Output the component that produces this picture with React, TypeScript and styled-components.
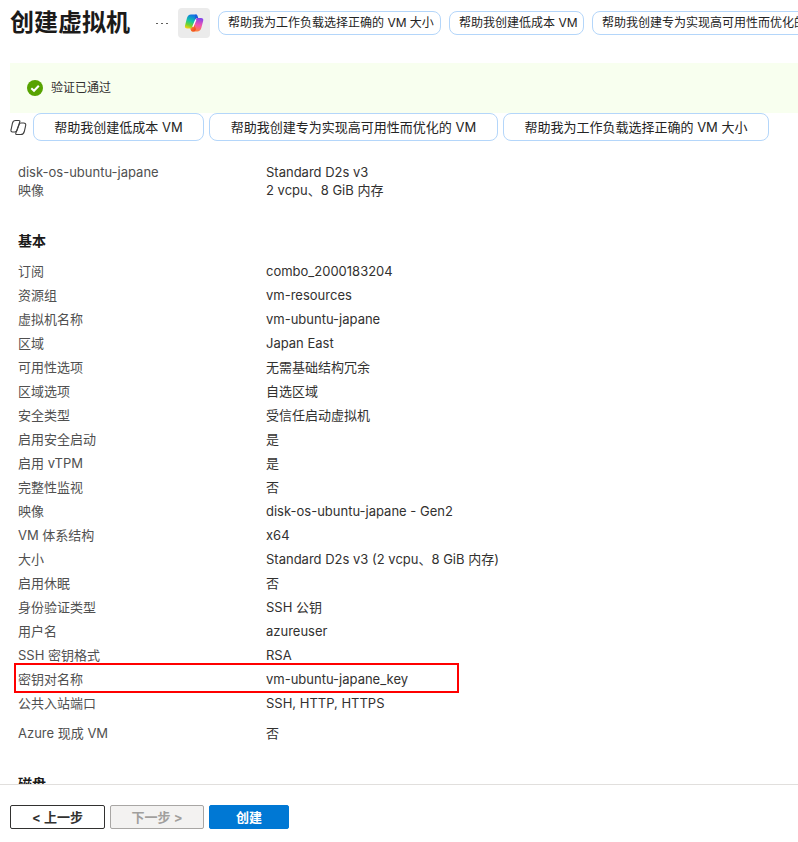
import React from "react";
import styled, { createGlobalStyle } from "styled-components";

const Global = createGlobalStyle`
  html, body { margin: 0; padding: 0; background: #fff; height: 100%; overflow: hidden; }
  body { font-family: Inter, "Noto Sans CJK SC", sans-serif; color: #323130; }
  #root { height: 100%; }
`;

const Page = styled.div`
  width: 798px;
  height: 842px;
  display: flex;
  flex-direction: column;
  overflow: hidden;
`;
const Header = styled.header`
  height: 30px;
  padding: 8px 0 0 10px;
  display: flex;
  align-items: center;
  flex: none;
  overflow: hidden;
`;
const Title = styled.h1`
  margin: 0;
  font-size: 24px;
  line-height: 30px;
  font-weight: 700;
  color: #1b1a19;
  white-space: nowrap;
`;
const More = styled.span`
  margin-left: 26px;
  width: 12px;
  display: flex;
  justify-content: space-between;
  flex: none;
`;
const Dot = styled.i`
  width: 2px;
  height: 1px;
  background: #605e5c;
`;
const CopilotTile = styled.div`
  margin-left: 10px;
  width: 32px;
  height: 30px;
  border-radius: 4px;
  background: #ebebeb;
  display: flex;
  align-items: center;
  justify-content: center;
  flex: none;
`;
const HeaderChips = styled.div`
  margin-left: 8px;
  display: flex;
  gap: 8px;
  flex: none;
`;
const HeaderChip = styled.span<{ $w: number }>`
  flex: none;
  width: ${(p) => p.$w}px;
  box-sizing: border-box;
  height: 24px;
  padding-left: 9px;
  border: 1px solid #b4d6fa;
  border-radius: 8px;
  font-size: 12px;
  line-height: 22px;
  color: #242424;
  white-space: nowrap;
`;
const Banner = styled.div`
  margin: 25px 0 0 10px;
  height: 50px;
  padding: 0 0 0 17px;
  background: #f8ffef;
  display: flex;
  align-items: center;
  gap: 8px;
  flex: none;
  font-size: 12px;
  color: #323130;
`;
const BannerText = styled.span`
  line-height: 16px;
`;
const PromptRow = styled.div`
  display: flex;
  align-items: center;
  height: 28px;
  padding-left: 10px;
  flex: none;
`;
const PromptIcon = styled.span`
  display: flex;
  width: 17px;
  margin-right: 6px;
  flex: none;
`;
const PromptChips = styled.div`
  display: flex;
  gap: 5px;
`;
const PromptChip = styled.span<{ $w: number }>`
  width: ${(p) => p.$w}px;
  box-sizing: border-box;
  height: 28px;
  border: 1px solid #b4d6fa;
  border-radius: 8px;
  font-size: 13px;
  line-height: 26px;
  text-align: center;
  color: #242424;
  white-space: nowrap;
`;
const Content = styled.main`
  flex: 1;
  min-height: 0;
  overflow: hidden;
  padding: 22px 0 0 18px;
  font-size: 13px;
`;
const Summary = styled.div`
  display: grid;
  grid-template-columns: 248px 1fr;
  line-height: 18px;
`;
const SectionTitle = styled.h2`
  margin: 32px 0 0;
  font-size: 14px;
  line-height: 20px;
  font-weight: 700;
  color: #1b1a19;
`;
const Rows = styled.div`
  margin-top: 8px;
  display: flex;
  flex-direction: column;
`;
const Row = styled.div<{ $tall?: boolean }>`
  display: grid;
  grid-template-columns: 248px 1fr;
  height: 24px;
  line-height: 24px;
  position: relative;
  margin-top: ${(p) => (p.$tall ? "6px" : "0")};
`;
const Mark = styled.span`
  position: absolute;
  left: -4px;
  top: -4px;
  width: 445px;
  height: 30px;
  box-sizing: border-box;
  border: 2px solid #f00;
`;
const Label = styled.span`
  color: #505050;
`;
const Value = styled.span`
  color: #323130;
`;
const LastSection = styled(SectionTitle)`
  margin-top: 29px;
`;
const Footer = styled.footer`
  flex: none;
  box-sizing: border-box;
  height: 58px;
  border-top: 1px solid #e1dfdd;
  padding: 20px 0 0 10px;
  display: flex;
  gap: 5px;
  align-items: flex-start;
  background: #fff;
`;
const Btn = styled.button<{ $kind: "prev" | "next" | "go" }>`
  box-sizing: border-box;
  height: 24px;
  padding: 0;
  width: ${(p) => (p.$kind === "prev" ? 95 : p.$kind === "next" ? 94 : 80)}px;
  border-radius: 2px;
  font-family: inherit;
  font-size: 13px;
  font-weight: 700;
  line-height: 20px;
  border: 1px solid
    ${(p) => (p.$kind === "prev" ? "#323130" : p.$kind === "next" ? "#a8a6a4" : "#0078d4")};
  background: ${(p) => (p.$kind === "prev" ? "#fff" : p.$kind === "next" ? "#f3f2f1" : "#0078d4")};
  color: ${(p) => (p.$kind === "prev" ? "#323130" : p.$kind === "next" ? "#a19f9d" : "#fff")};
`;

const CopilotLogo = () => (
  <svg width="20" height="20" viewBox="0 0 20 20" aria-hidden="true">
    <defs>
      <linearGradient id="cpa" x1="0.6" y1="0" x2="0.3" y2="1">
        <stop offset="0" stopColor="#0f6fe8" />
        <stop offset="0.45" stopColor="#12c4a8" />
        <stop offset="0.75" stopColor="#6fd32e" />
        <stop offset="1" stopColor="#f6d010" />
      </linearGradient>
      <linearGradient id="cpb" x1="0.6" y1="0" x2="0.4" y2="1">
        <stop offset="0" stopColor="#8344ea" />
        <stop offset="0.5" stopColor="#f052b0" />
        <stop offset="1" stopColor="#fd8632" />
      </linearGradient>
      <linearGradient id="cpc" x1="0" y1="0" x2="1" y2="1">
        <stop offset="0" stopColor="#f9a020" />
        <stop offset="1" stopColor="#f03a24" />
      </linearGradient>
    </defs>
    <path d="M7 1.500h5c1 0 1.400.7 1 1.600L9 13.500c-.6 1.500-1.500 2.100-3 2.100H3.200C1.400 15.600.6 14.500 1 12.800l1.900-7.500C3.500 3 4.900 1.500 7 1.500z" fill="url(#cpa)" />
    <path d="M13.800 5h3.200c1.800 0 2.600 1.100 2.200 2.700l-1.900 7.200c-.6 2.200-2 3.500-4.100 3.500H8.200c-1 0-1.500-.7-1.100-1.600L11.600 6.500c.4-1 1.100-1.500 2.200-1.500z" fill="url(#cpb)" />
    <path d="M6.200 15.600c1.400 0 2.300-.7 2.800-2l1-2.600 1.700 4.300c.5 1.300-.2 3.100-1.600 3.100H8.500c-1.100 0-1.900-1.300-2.300-2.800z" fill="url(#cpc)" />
    <path d="M11.500 1.500c1.100 0 1.900.7 2.200 1.800l.5 1.700h-1.500c-1 0-1.600.5-2 1.500l.3-2.600c.2-1 .2-2.400.5-2.400z" fill="#1a5fd8" />
    <path d="M11.700 7 9 13.500" fill="none" stroke="#fff" strokeWidth="1.300" strokeLinecap="round" />
  </svg>
);

const CopilotMono = () => (
  <svg width="17" height="17" viewBox="0 0 17 17" fill="none" stroke="#3f3f3f" strokeWidth="1.100" aria-hidden="true">
    <path d="M5.500 1.500h3.400c.8 0 1.200.6.900 1.300L6.900 11.500c-.4 1-1 1.500-2 1.500H2.500C1.300 13 .7 12.100 1 11l1.400-6.700C2.800 2.700 4 1.500 5.500 1.500z" />
    <path d="M10.800 4h2.900c1.500 0 2.300.9 2 2.300l-1.400 6.200c-.5 1.900-1.600 3-3.400 3H6.800c-.9 0-1.300-.6-1-1.400L9.200 5.400C9.500 4.500 10 4 10.800 4z" />
  </svg>
);

const CheckBadge = () => (
  <svg width="16" height="16" viewBox="0 0 16 16" aria-hidden="true">
    <circle cx="8" cy="8" r="8" fill="#57a300" />
    <path d="M4.300 8.200 7 10.800l4.800-5" fill="none" stroke="#fff" strokeWidth="2" />
  </svg>
);

const basics: [string, string][] = [
  ["订阅", "combo_2000183204"],
  ["资源组", "vm-resources"],
  ["虚拟机名称", "vm-ubuntu-japane"],
  ["区域", "Japan East"],
  ["可用性选项", "无需基础结构冗余"],
  ["区域选项", "自选区域"],
  ["安全类型", "受信任启动虚拟机"],
  ["启用安全启动", "是"],
  ["启用 vTPM", "是"],
  ["完整性监视", "否"],
  ["映像", "disk-os-ubuntu-japane - Gen2"],
  ["VM 体系结构", "x64"],
  ["大小", "Standard D2s v3 (2 vcpu、8 GiB 内存)"],
  ["启用休眠", "否"],
  ["身份验证类型", "SSH 公钥"],
  ["用户名", "azureuser"],
  ["SSH 密钥格式", "RSA"],
  ["密钥对名称", "vm-ubuntu-japane_key"],
  ["公共入站端口", "SSH, HTTP, HTTPS"],
  ["Azure 现成 VM", "否"],
];

export default function App() {
  return (
    <Page>
      <Global />
      <Header>
        <Title>创建虚拟机</Title>
        <More>
          <Dot />
          <Dot />
          <Dot />
        </More>
        <CopilotTile>
          <CopilotLogo />
        </CopilotTile>
        <HeaderChips>
          <HeaderChip $w={223}>帮助我为工作负载选择正确的 VM 大小</HeaderChip>
          <HeaderChip $w={135}>帮助我创建低成本 VM</HeaderChip>
          <HeaderChip $w={250}>帮助我创建专为实现高可用性而优化的 VM</HeaderChip>
        </HeaderChips>
      </Header>
      <Banner>
        <CheckBadge />
        <BannerText>验证已通过</BannerText>
      </Banner>
      <PromptRow>
        <PromptIcon>
          <CopilotMono />
        </PromptIcon>
        <PromptChips>
          <PromptChip $w={171}>帮助我创建低成本 VM</PromptChip>
          <PromptChip $w={289}>帮助我创建专为实现高可用性而优化的 VM</PromptChip>
          <PromptChip $w={266}>帮助我为工作负载选择正确的 VM 大小</PromptChip>
        </PromptChips>
      </PromptRow>
      <Content>
        <Summary>
          <Label>disk-os-ubuntu-japane</Label>
          <Value>Standard D2s v3</Value>
          <Label>映像</Label>
          <Value>2 vcpu、8 GiB 内存</Value>
        </Summary>
        <SectionTitle>基本</SectionTitle>
        <Rows>
          {basics.map(([k, v]) => (
            <Row key={k} $tall={k.startsWith("Azure")}>
              <Label>{k}</Label>
              <Value>{v}</Value>
              {k === "密钥对名称" && <Mark />}
            </Row>
          ))}
        </Rows>
        <LastSection>磁盘</LastSection>
      </Content>
      <Footer>
        <Btn $kind="prev">&lt; 上一步</Btn>
        <Btn $kind="next">下一步 &gt;</Btn>
        <Btn $kind="go">创建</Btn>
      </Footer>
    </Page>
  );
}
